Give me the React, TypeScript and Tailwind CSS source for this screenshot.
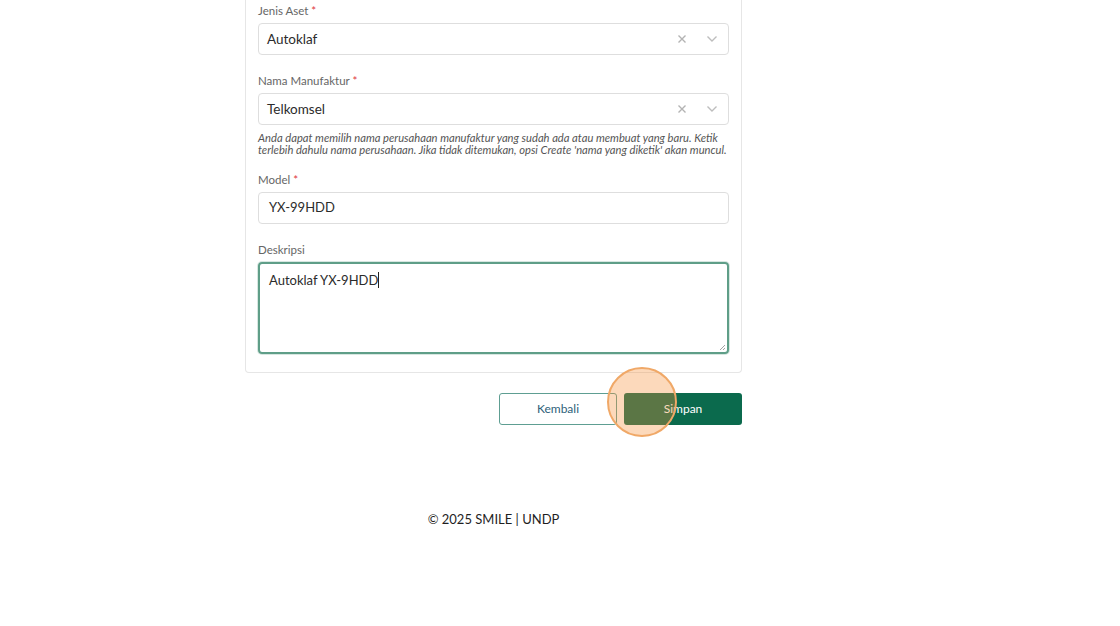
import React from 'react';

const Req = () => <span className="text-[#e0393e]"> *</span>;

const Label = ({ children }: { children: React.ReactNode }) => (
  <div className="text-[11.5px] leading-[22px] text-[#666] mb-[1px]">{children}</div>
);

const SelectBox = ({ value }: { value: string }) => (
  <div className="flex items-center h-[32px] border border-[#dedede] rounded-[4px] bg-white pl-[8px] pr-[8px]">
    <span className="flex-1 text-[13.5px] text-[#2b2b2b]">{value}</span>
    <svg width="10" height="10" viewBox="0 0 10 10" className="mr-[19px]">
      <path d="M1.5 1.5 L8.5 8.5 M8.5 1.5 L1.5 8.5" stroke="#b3b3b3" strokeWidth="1.4" />
    </svg>
    <svg width="12" height="8" viewBox="0 0 12 8" className="mr-[2px]">
      <path d="M1.5 1.5 L6 6 L10.5 1.5" stroke="#bdbdbd" strokeWidth="1.4" fill="none" />
    </svg>
  </div>
);

const App = () => {
  return (
    <div className="min-h-[626px] bg-white font-['Lato','Liberation_Sans',sans-serif] relative">
      <div className="ml-[245px] w-[497px]">
        <div className="border border-t-0 border-[#e6e6e6] rounded-b-[4px] px-[12px] pb-[18px] bg-white">
          <Label>Jenis Aset<Req /></Label>
          <SelectBox value="Autoklaf" />

          <div className="mt-[15px]">
            <Label>Nama Manufaktur<Req /></Label>
            <SelectBox value="Telkomsel" />
            <p className="mt-[7px] text-[11.2px] leading-[12px] italic text-[#555]">
              Anda dapat memilih nama perusahaan manufaktur yang sudah ada atau membuat yang baru. Ketik terlebih dahulu nama perusahaan. Jika tidak ditemukan, opsi Create 'nama yang diketik' akan muncul.
            </p>
          </div>

          <div className="mt-[13px]">
            <Label>Model<Req /></Label>
            <div className="flex items-center h-[32px] border border-[#dedede] rounded-[4px] px-[10px] text-[13px] text-[#2b2b2b]">
              YX-99HDD
            </div>
          </div>

          <div className="mt-[15px]">
            <Label>Deskripsi</Label>
            <div className="relative h-[92px] border-2 border-[#5f9e88] rounded-[4px] shadow-[0_0_0_1px_rgba(95,158,136,0.25)] px-[9px] pt-[7px] text-[13px] text-[#2b2b2b]">
              <span>Autoklaf YX-9HDD</span>
              <span className="inline-block w-px h-[16px] bg-[#222] align-[-3px]" />
              <svg width="8" height="8" viewBox="0 0 8 8" className="absolute right-[1px] bottom-[1px]">
                <path d="M7 2 L2 7 M7 5 L5 7" stroke="#999" strokeWidth="0.9" />
              </svg>
            </div>
          </div>
        </div>

        <div className="flex justify-end gap-[7px] mt-[20px]">
          <button className="w-[118px] h-[32px] border border-[#5e9e92] rounded-[3px] text-[12px] text-[#2f5f7a] bg-white">
            Kembali
          </button>
          <button className="w-[118px] h-[32px] rounded-[3px] text-[12px] text-white bg-[#0b6a4d]">
            Simpan
          </button>
        </div>
      </div>

      <div className="ml-[245px] w-[497px] mt-[85px] text-center text-[13px] text-[#1f1f1f]">
        © 2025 SMILE | UNDP
      </div>

      <div className="absolute left-[607px] top-[367px] w-[70px] h-[70px] rounded-full border-2 border-[#f0a867] bg-[rgba(246,143,55,0.34)] pointer-events-none" />
    </div>
  );
};

export default App;
